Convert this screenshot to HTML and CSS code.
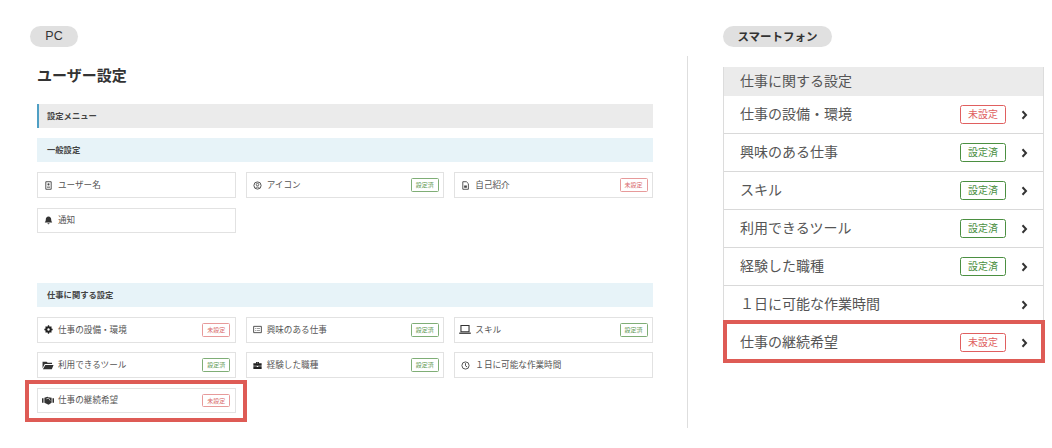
FILE: index.html
```html
<!DOCTYPE html>
<html lang="ja">
<head>
<meta charset="utf-8">
<title>ユーザー設定</title>
<link rel="stylesheet" href="styles.css">
</head>
<body>
<div class="page">
  <section class="pc">
    <span class="pill">PC</span>
    <div class="pc-body">
      <h1 class="title">ユーザー設定</h1>
      <div class="menu-bar">設定メニュー</div>
      <div class="sec-bar">一般設定</div>
      <div class="grid grid-first">
        <div class="card"><svg class="ico" viewBox="0 0 10 10"><path d="M2 .8h6v8.4H2z" fill="none" stroke="#444" stroke-width="1"/><circle cx="5" cy="3.800" r="1.200" fill="#444"/><path d="M3.300 7.300h3.400v-1H3.300z" fill="#444"/></svg><span class="label">ユーザー名</span></div>
        <div class="card"><svg class="ico" viewBox="0 0 10 10"><circle cx="5" cy="5" r="4" fill="none" stroke="#444" stroke-width="1"/><circle cx="5" cy="4" r="1.400" fill="none" stroke="#444" stroke-width=".9"/><path d="M2.800 7.600c.6-1 3.800-1 4.400 0" fill="none" stroke="#444" stroke-width=".9"/></svg><span class="label">アイコン</span><span class="badge ok">設定済</span></div>
        <div class="card"><svg class="ico" viewBox="0 0 10 10"><path d="M2 .8h4l2.200 2.200v6.200H2z" fill="none" stroke="#444" stroke-width="1"/><path d="M3.500 5h3v2.500h-3z" fill="#444"/></svg><span class="label">自己紹介</span><span class="badge ng">未設定</span></div>
        <div class="card"><svg class="ico" viewBox="0 0 10 10"><path d="M5 .6c-2 0-3 1.500-3 3.400 0 1.800-.7 2.500-1.200 3.200h8.400C8.700 6.500 8 5.800 8 4 8 2.100 7 .6 5 .6zM3.900 8.100a1.100 1.100 0 0 0 2.200 0z" fill="#333"/></svg><span class="label">通知</span></div>
      </div>
      <div class="sec-bar sec-second">仕事に関する設定</div>
      <div class="grid">
        <div class="card"><svg class="ico" viewBox="0 0 10 10"><circle cx="5" cy="5" r="2.600" fill="none" stroke="#222" stroke-width="2"/><path d="M5 .4v9.200M.4 5h9.200M1.800 1.800l6.400 6.400M8.200 1.800L1.800 8.200" stroke="#222" stroke-width="1.500"/><circle cx="5" cy="5" r="1.300" fill="#fff"/></svg><span class="label">仕事の設備・環境</span><span class="badge ng">未設定</span></div>
        <div class="card"><svg class="ico" viewBox="0 0 10 10"><path d="M.7 1.500h8.600v7H.7z" fill="none" stroke="#444" stroke-width="1"/><path d="M2.200 3.500h1v.8h-1zM4 3.500h3.800v.8H4zM2.200 5.700h1v.8h-1zM4 5.700h3.800v.8H4z" fill="#444"/></svg><span class="label">興味のある仕事</span><span class="badge ok">設定済</span></div>
        <div class="card"><svg class="ico ico-wide" viewBox="0 0 11 10"><path d="M1.800 1.300h7.400v5.700H1.800z" fill="none" stroke="#333" stroke-width="1"/><path d="M.2 7.800h10.600v1.200H.2z" fill="#333"/></svg><span class="label">スキル</span><span class="badge ok">設定済</span></div>
        <div class="card"><svg class="ico ico-wide" viewBox="0 0 11 10"><path d="M.5 1.500h3.700l1 1h4v1.200H2.500L.5 7.500zM3 4.500h7.600L9 8.500H.8z" fill="#333"/></svg><span class="label">利用できるツール</span><span class="badge ok">設定済</span></div>
        <div class="card"><svg class="ico" viewBox="0 0 10 10"><path d="M3.300 2.500V1h3.400v1.500h-.9V1.900H4.200v.6zM.4 2.500h9.200v2.700H.4zM.4 5.900h3.800v.8h1.600v-.8h3.800v3H.4z" fill="#222"/></svg><span class="label">経験した職種</span><span class="badge ok">設定済</span></div>
        <div class="card"><svg class="ico" viewBox="0 0 10 10"><circle cx="5" cy="5" r="4" fill="none" stroke="#444" stroke-width="1"/><path d="M5 2.400V5.300L6.800 6.600" fill="none" stroke="#444" stroke-width="1"/></svg><span class="label">１日に可能な作業時間</span></div>
        <div class="card marked"><svg class="ico ico-wide" viewBox="0 0 11 10"><path d="M2.200 2.500L5 1.500l1 .5 2.800.5v4.500L6 8.800 2.200 7z" fill="#333"/><path d="M0 3h1.400v4H0zM9.600 3H11v4H9.600z" fill="#333"/><path d="M4 3.500L6 2.800 7.500 5" fill="none" stroke="#fff" stroke-width=".6"/></svg><span class="label">仕事の継続希望</span><span class="badge ng">未設定</span><span class="mark mark-pc"></span></div>
      </div>
    </div>
  </section>
  <section class="sp">
    <span class="pill pill-sp">スマートフォン</span>
    <div class="sp-body">
      <div class="list">
        <div class="list-head">仕事に関する設定</div>
        <div class="row"><span class="row-label">仕事の設備・環境</span><span class="tag ng">未設定</span><svg class="chev" viewBox="0 0 7 10"><path d="M1.500 1.300L5 5 1.500 8.700" fill="none" stroke="#333" stroke-width="2"/></svg></div>
        <div class="row"><span class="row-label">興味のある仕事</span><span class="tag ok">設定済</span><svg class="chev" viewBox="0 0 7 10"><path d="M1.500 1.300L5 5 1.500 8.700" fill="none" stroke="#333" stroke-width="2"/></svg></div>
        <div class="row"><span class="row-label">スキル</span><span class="tag ok">設定済</span><svg class="chev" viewBox="0 0 7 10"><path d="M1.500 1.300L5 5 1.500 8.700" fill="none" stroke="#333" stroke-width="2"/></svg></div>
        <div class="row"><span class="row-label">利用できるツール</span><span class="tag ok">設定済</span><svg class="chev" viewBox="0 0 7 10"><path d="M1.500 1.300L5 5 1.500 8.700" fill="none" stroke="#333" stroke-width="2"/></svg></div>
        <div class="row"><span class="row-label">経験した職種</span><span class="tag ok">設定済</span><svg class="chev" viewBox="0 0 7 10"><path d="M1.500 1.300L5 5 1.500 8.700" fill="none" stroke="#333" stroke-width="2"/></svg></div>
        <div class="row"><span class="row-label">１日に可能な作業時間</span><svg class="chev" viewBox="0 0 7 10"><path d="M1.500 1.300L5 5 1.500 8.700" fill="none" stroke="#333" stroke-width="2"/></svg></div>
        <div class="row marked row-last"><span class="row-label">仕事の継続希望</span><span class="tag ng">未設定</span><svg class="chev" viewBox="0 0 7 10"><path d="M1.500 1.300L5 5 1.500 8.700" fill="none" stroke="#333" stroke-width="2"/></svg><span class="mark mark-sp"></span></div>
      </div>
    </div>
  </section>
</div>
</body>
</html>
```
FILE: styles.css
```css
* { box-sizing: border-box; }
html, body { margin: 0; padding: 0; background: #fff; }
body { font-family: "Noto Sans CJK JP", "Liberation Sans", sans-serif; color: #555; }
.page { display: flex; width: 1052px; height: 448px; padding-top: 26px; }
.pc { width: 687px; padding-left: 30px; }
.sp { width: 365px; }
.pill {
  display: block; width: 48px; height: 21px; border-radius: 11px; background: #e0e0e0;
  font-family: "Liberation Sans", sans-serif; font-size: 12.500px; line-height: 21px;
  text-align: center; color: #333;
}
.pill-sp {
  width: 109px; margin-left: 36px; font-family: "Noto Sans CJK JP", sans-serif;
  font-size: 11.500px; font-weight: 700; line-height: 20px;
}
.pc-body { padding: 0 34px 0 7px; }
.title { margin: 18px 0 19px; height: 20px; font-size: 15px; line-height: 20px; font-weight: 700; color: #333; }
.menu-bar {
  height: 24.400px; padding-left: 8px; border-left: 2.500px solid #4f9fc4; background: #ebebeb;
  font-size: 8.300px; line-height: 22px; font-weight: 700; color: #444;
}
.sec-bar {
  height: 24px; margin-top: 10px; padding-left: 10px; background: #e7f3f8;
  font-size: 8.300px; line-height: 22px; font-weight: 700; color: #444;
}
.sec-second { margin-top: 50px; }
.grid { display: grid; grid-template-columns: repeat(3, 1fr); column-gap: 10px; row-gap: 9.600px; margin-top: 10px; }
.card {
  position: relative; display: flex; align-items: center; height: 25.600px;
  padding: 0 4.500px 0 6px; border: 1px solid #e2e2e2; background: #fff;
}
.ico { flex: none; width: 9px; height: 9px; margin-right: 5px; }
.ico-wide { width: 12px; height: 11px; margin-left: -2px; margin-right: 4px; }
.label { flex: 1; padding-bottom: 2px; font-size: 8.600px; line-height: 12px; color: #555; white-space: nowrap; }
.badge {
  flex: none; width: 28px; height: 13.500px; border: 1px solid; border-radius: 1.500px;
  font-size: 6px; line-height: 11px; text-align: center; background: #fff;
}
.badge.ok { border-color: #7fae76; color: #5f9a55; }
.badge.ng { border-color: #e79a9a; color: #d96b6b; }
.mark { position: absolute; border: 4px solid #de5b55; pointer-events: none; }
.mark-pc { top: -9px; left: -13px; right: -12px; bottom: -10px; }
.sp-body { height: 372px; margin-top: 9px; padding: 11px 0 0 35px; border-left: 1px solid #dedede; }
.list { width: 321px; border: solid #dcdcdc; border-width: 0 1px; }
.list-head { height: 29px; padding-left: 16px; background: #ebebeb; font-size: 14px; line-height: 27px; color: #555; }
.row {
  position: relative; display: flex; align-items: center; height: 38px;
  padding: 0 15px 0 16px; border-bottom: 1px solid #d9d9d9; background: #fff;
}
.row-last { border-bottom-color: transparent; }
.row-label { flex: 1; padding-bottom: 3px; font-size: 14px; line-height: 20px; color: #555; white-space: nowrap; }
.tag {
  flex: none; width: 46px; height: 19px; margin-right: 15px; border: 1px solid; border-radius: 2.500px;
  font-size: 10px; line-height: 16px; text-align: center; background: #fff;
}
.tag.ok { border-color: #4b8f41; color: #4b8f41; }
.tag.ng { border-color: #e05f5f; color: #e05f5f; }
.chev { flex: none; width: 7px; height: 10px; }
.mark-sp { top: -4px; left: -1px; right: -2px; bottom: -2px; }
```
